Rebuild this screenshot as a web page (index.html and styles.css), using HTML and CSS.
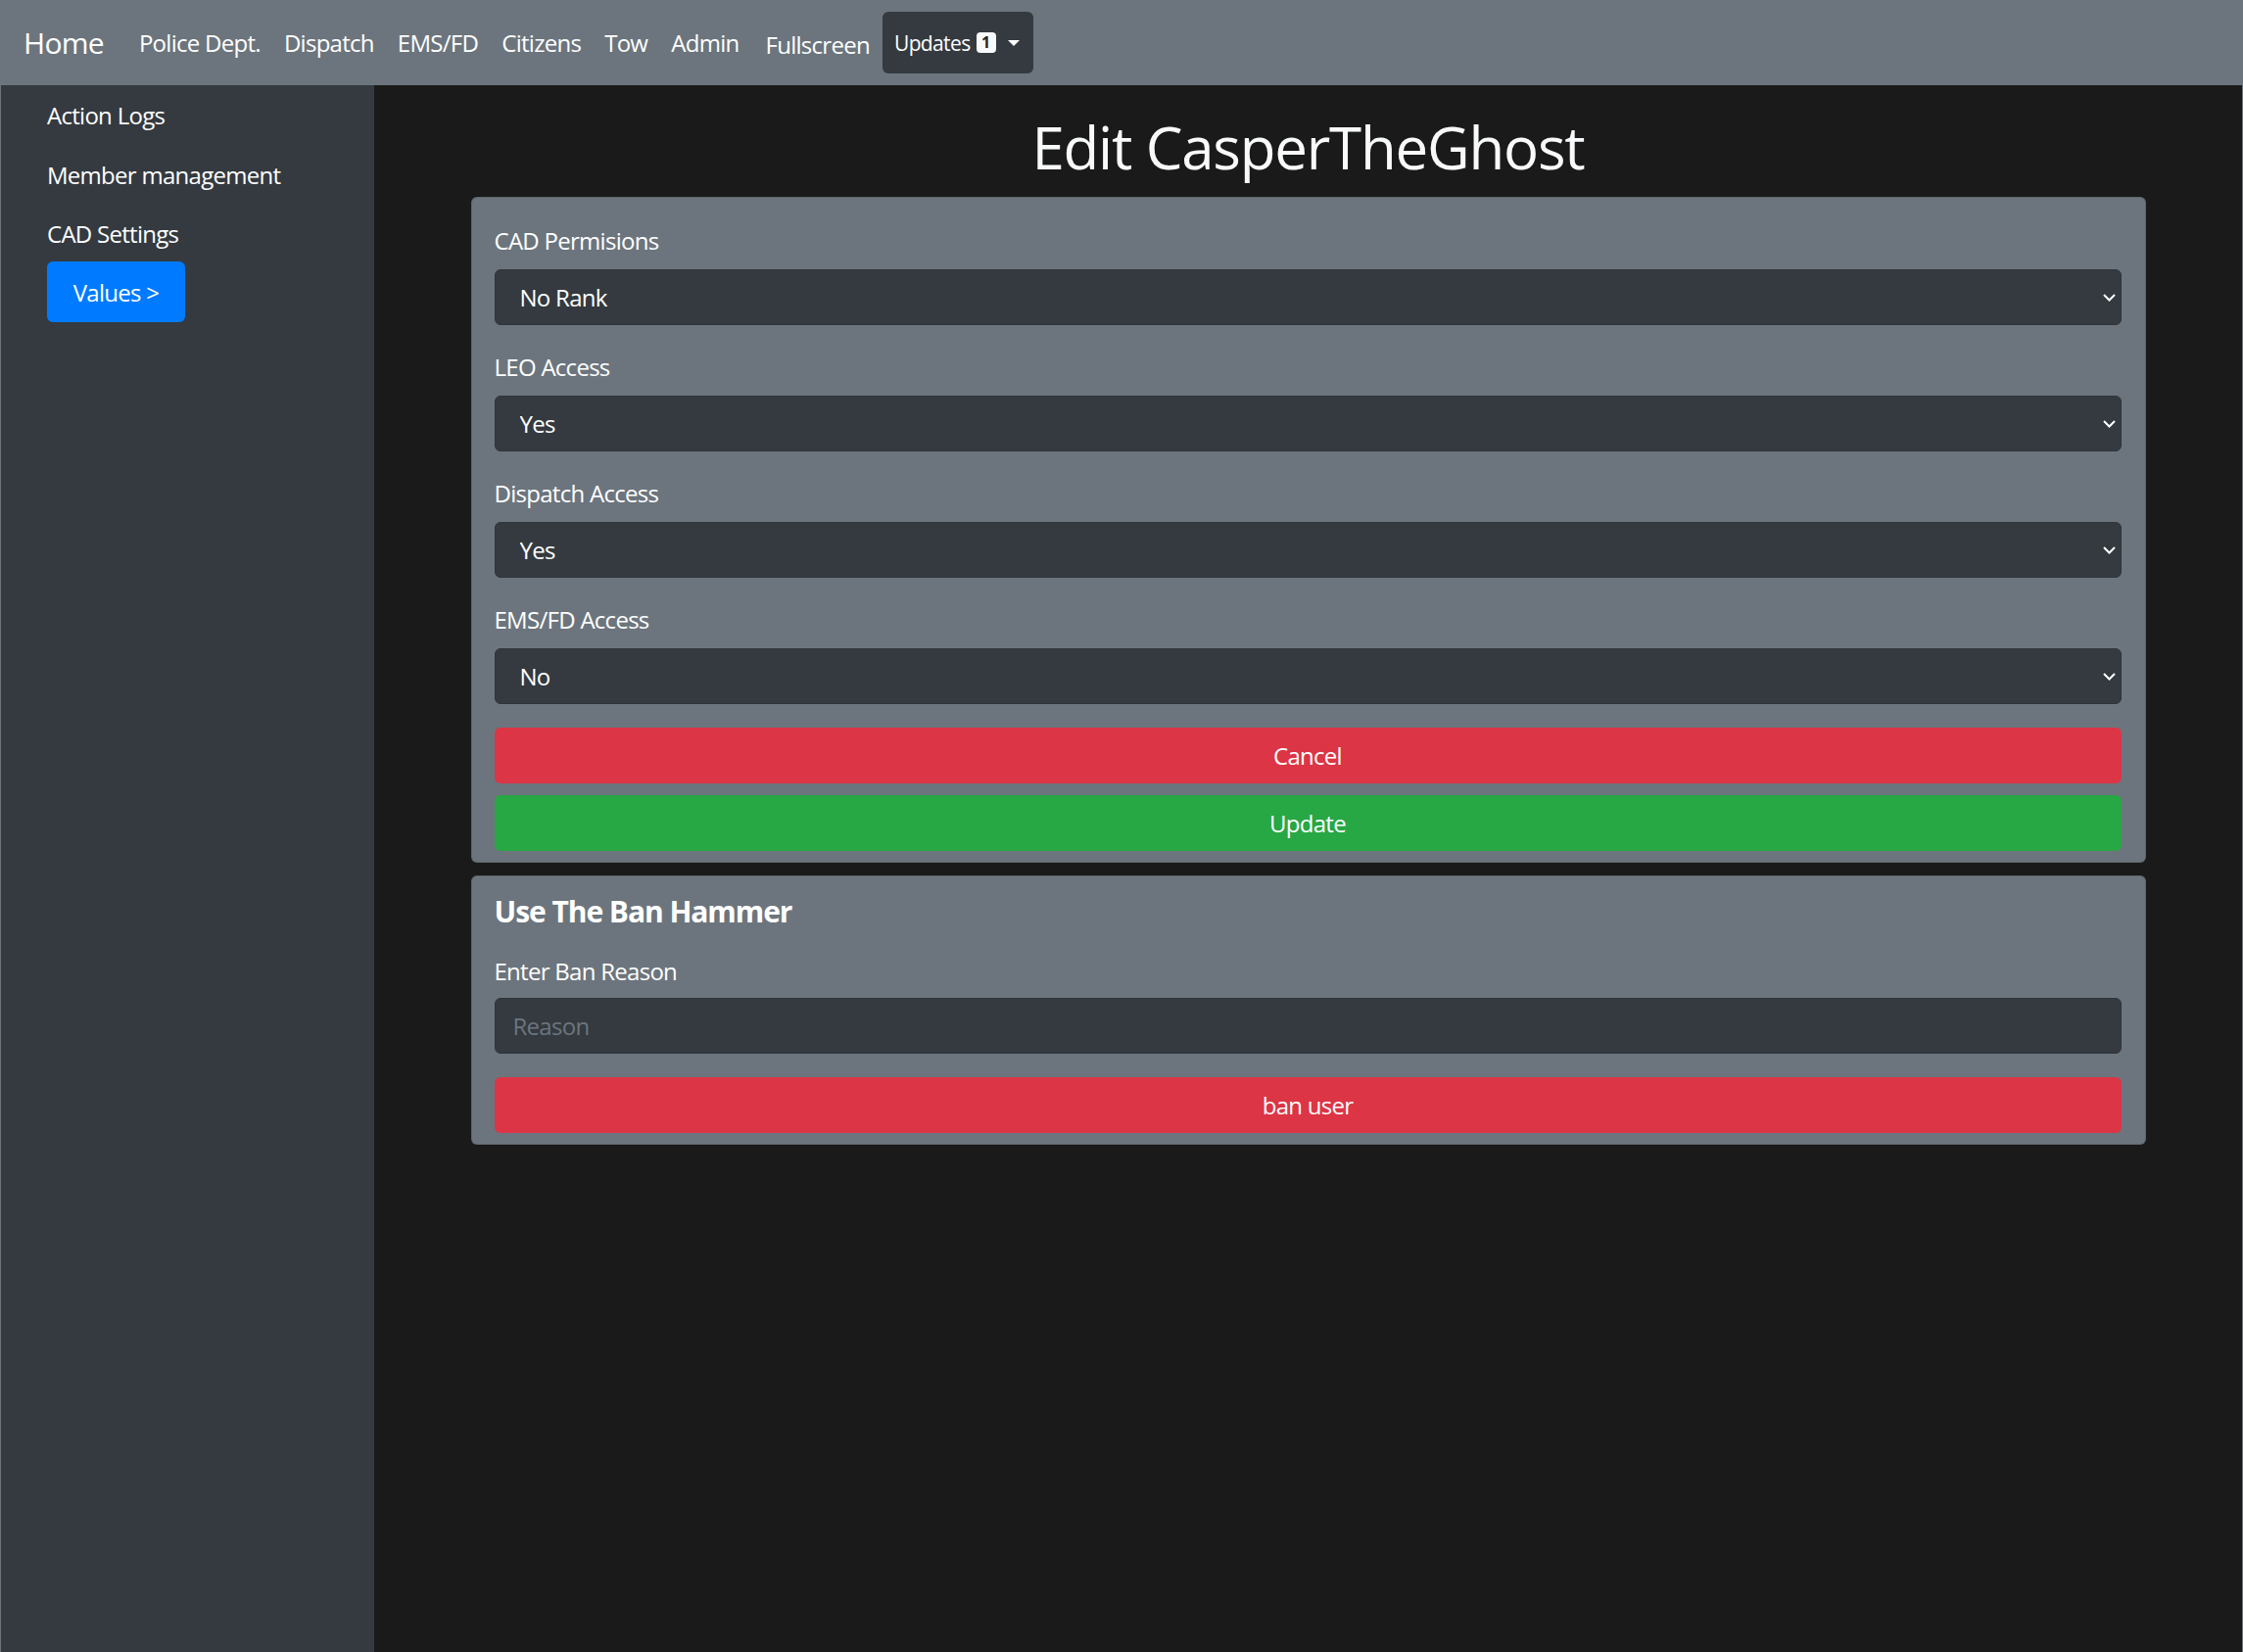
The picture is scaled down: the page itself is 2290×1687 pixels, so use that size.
FILE: index.html
```html
<!DOCTYPE html>
<html lang="en">
<head>
<meta charset="utf-8">
<title>Edit CasperTheGhost</title>
<link rel="stylesheet" href="styles.css">
</head>
<body>
<nav class="topnav">
  <a class="brand" href="#">Home</a>
  <a class="nav-link" href="#">Police Dept.</a>
  <a class="nav-link" href="#">Dispatch</a>
  <a class="nav-link" href="#">EMS/FD</a>
  <a class="nav-link" href="#">Citizens</a>
  <a class="nav-link" href="#">Tow</a>
  <a class="nav-link" href="#">Admin</a>
  <a class="nav-link fullscreen" href="#">Fullscreen</a>
  <button class="updates" type="button">Updates<span class="badge">1</span><span class="caret"></span></button>
</nav>
<div class="layout">
  <aside class="sidebar">
    <a class="side-link" href="#">Action Logs</a>
    <a class="side-link" href="#">Member management</a>
    <a class="side-link" href="#">CAD Settings</a>
    <a class="side-btn" href="#">Values &gt;</a>
  </aside>
  <main class="main">
    <h1 class="title">Edit CasperTheGhost</h1>
    <form class="card card-edit">
      <div class="group">
        <label class="label">CAD Permisions</label>
        <div class="select-wrap">
          <select class="select"><option>No Rank</option></select>
          <svg class="chev" width="13" height="8" viewBox="0 0 13 8"><polyline points="1,1 6.5,6.5 12,1" fill="none" stroke="#fff" stroke-width="2"/></svg>
        </div>
      </div>
      <div class="group">
        <label class="label">LEO Access</label>
        <div class="select-wrap">
          <select class="select"><option>Yes</option></select>
          <svg class="chev" width="13" height="8" viewBox="0 0 13 8"><polyline points="1,1 6.5,6.5 12,1" fill="none" stroke="#fff" stroke-width="2"/></svg>
        </div>
      </div>
      <div class="group">
        <label class="label">Dispatch Access</label>
        <div class="select-wrap">
          <select class="select"><option>Yes</option></select>
          <svg class="chev" width="13" height="8" viewBox="0 0 13 8"><polyline points="1,1 6.5,6.5 12,1" fill="none" stroke="#fff" stroke-width="2"/></svg>
        </div>
      </div>
      <div class="group">
        <label class="label">EMS/FD Access</label>
        <div class="select-wrap">
          <select class="select"><option>No</option></select>
          <svg class="chev" width="13" height="8" viewBox="0 0 13 8"><polyline points="1,1 6.5,6.5 12,1" fill="none" stroke="#fff" stroke-width="2"/></svg>
        </div>
      </div>
      <button class="btn btn-danger btn-gap" type="button">Cancel</button>
      <button class="btn btn-success" type="button">Update</button>
    </form>
    <div class="card card-ban">
      <h5 class="card-title">Use The Ban Hammer</h5>
      <label class="label label-ban">Enter Ban Reason</label>
      <input class="input" type="text" placeholder="Reason">
      <button class="btn btn-danger" type="button">ban user</button>
    </div>
  </main>
</div>
</body>
</html>
```

FILE: styles.css
```css
* {
  box-sizing: border-box;
}

html,
body {
  margin: 0;
  padding: 0;
}

body {
  background: #1a1a1a;
  color: #fff;
  font-family: "Open Sans", "Noto Sans", sans-serif;
  font-size: 24px;
  line-height: 36px;
  letter-spacing: -0.03em;
}

a {
  color: #fff;
  text-decoration: none;
}

/* ---------- top navigation ---------- */
.topnav {
  height: 87px;
  background: #6c757d;
  display: flex;
  align-items: center;
  padding: 0 24px;
}

.brand {
  font-size: 30px;
  line-height: 36px;
  margin-right: 24px;
}

.nav-link {
  padding: 0 12px;
}

.fullscreen {
  margin-left: 3px;
  padding-top: 4px;
}

.updates {
  margin-left: 1px;
  height: 63px;
  background: #343a40;
  border: 0;
  border-radius: 6px;
  color: #fff;
  font-family: inherit;
  font-size: 21px;
  line-height: 32px;
  letter-spacing: -0.03em;
  padding: 0 14px 0 12px;
  display: flex;
  align-items: center;
}

.badge {
  margin-left: 6px;
  width: 20px;
  height: 21px;
  border-radius: 4px;
  background: #f8f9fa;
  color: #212529;
  font-size: 16px;
  font-weight: 700;
  line-height: 21px;
  letter-spacing: 0;
  display: flex;
  align-items: center;
  justify-content: center;
}

.caret {
  margin-left: 12px;
  width: 0;
  height: 0;
  border-top: 6px solid #fff;
  border-left: 6px solid transparent;
  border-right: 6px solid transparent;
}

/* ---------- layout ---------- */
.layout {
  display: flex;
  min-height: calc(100vh - 87px);
}

.sidebar {
  width: 382px;
  flex: none;
  background: #343a40;
  border-left: 1px solid #6c757d;
  padding-left: 47px;
  display: flex;
  flex-direction: column;
  align-items: flex-start;
}

.side-link {
  padding: 13px 0 12px;
}

.side-link:nth-child(3) {
  padding: 12px 0 13px;
}

.side-btn {
  margin-top: -3px;
  width: 141px;
  height: 62px;
  background: #007bff;
  border-radius: 6px;
  display: flex;
  align-items: center;
  justify-content: center;
  padding-top: 2px;
}

.main {
  flex: 1;
  border-right: 1px solid #6c757d;
  display: flex;
  flex-direction: column;
  align-items: center;
}

.title {
  font-size: 60px;
  font-weight: 500;
  line-height: 72px;
  margin: 27px 0 15px;
  color: #f8f9fa;
  letter-spacing: -0.02em;
}

/* ---------- cards ---------- */
.card {
  width: 1710px;
  background: #6c757d;
  border: 1px solid rgba(0, 0, 0, 0.125);
  border-radius: 6px;
  padding: 25px 24px 11px 23px;
}

.card-ban {
  margin-top: 13px;
  padding-top: 18px;
}

.group {
  margin-bottom: 24px;
}

.label {
  display: block;
  padding-top: 1px;
  margin-bottom: 11px;
}

.label-ban {
  margin-bottom: 9px;
}

.select-wrap {
  position: relative;
}

.select {
  -webkit-appearance: none;
  appearance: none;
  display: block;
  width: 100%;
  height: 57px;
  background: #343a40;
  border: 1px solid #30353b;
  border-radius: 6px;
  color: #fff;
  font: inherit;
  letter-spacing: inherit;
  padding: 0 40px 0 25px;
  outline: none;
}

.chev {
  position: absolute;
  right: 6px;
  top: 25px;
}

.card-title {
  font-size: 30px;
  font-weight: 700;
  line-height: 36px;
  letter-spacing: -0.035em;
  margin: 0 0 24px;
}

.input {
  display: block;
  width: 100%;
  height: 57px;
  background: #343a40;
  border: 1px solid #30353b;
  border-radius: 6px;
  color: #fff;
  font: inherit;
  letter-spacing: inherit;
  padding: 0 18px;
  margin-bottom: 24px;
  outline: none;
}

.input::placeholder {
  color: #6c757d;
}

.btn {
  display: block;
  width: 100%;
  height: 57px;
  border: 0;
  border-radius: 6px;
  color: #fff;
  font: inherit;
  letter-spacing: inherit;
}

.btn-gap {
  margin-bottom: 12px;
}

.btn-danger {
  background: #dc3545;
}

.btn-success {
  background: #28a745;
}
```
